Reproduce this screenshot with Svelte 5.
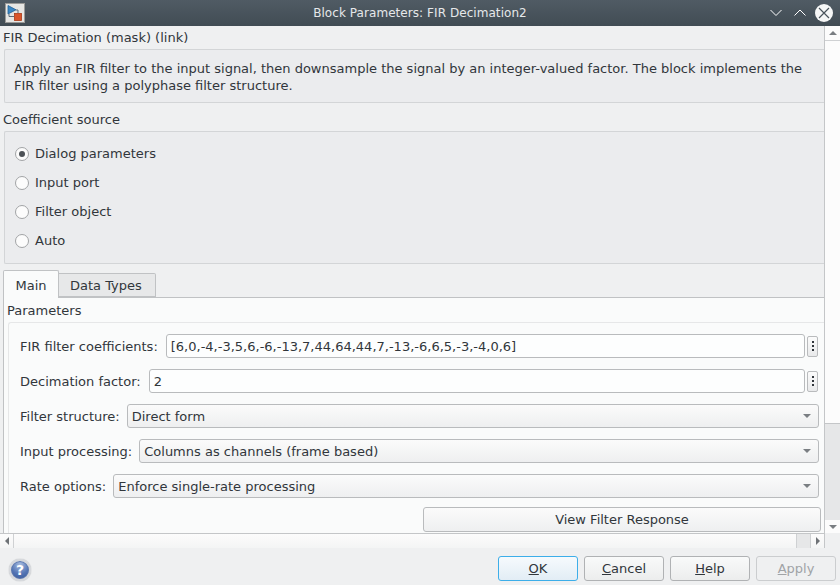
<script>
  const sources = ['Dialog parameters', 'Input port', 'Filter object', 'Auto'];
  const selects = [
    ['Filter structure:', 'Direct form'],
    ['Input processing:', 'Columns as channels (frame based)'],
    ['Rate options:', 'Enforce single-rate processing']
  ];
</script>

<div class="window">
  <header class="titlebar">
    <span class="appicon">
      <svg width="20" height="20" viewBox="0 0 20 20">
        <rect x="0.5" y="0.5" width="19" height="19" fill="#e6e6e4" stroke="#9a9a98" />
        <path d="M3 2.5 L3 11 L11 6.8 Z" fill="#3b87c4" stroke="#1f5f95" stroke-width="0.8" />
        <path d="M4 11 L4 13.5 L9 13.5 M11 7 L13 7 L13 10" fill="none" stroke="#5a6a78" stroke-width="1" />
        <rect x="9.5" y="10.5" width="7" height="7" fill="#d9552b" stroke="#a83a18" stroke-width="0.8" />
      </svg>
    </span>
    <span class="title">Block Parameters: FIR Decimation2</span>
    <span class="controls">
      <svg class="ctl" width="14" height="10" viewBox="0 0 14 10"><path d="M1.5 2 L7 7.5 L12.5 2" /></svg>
      <svg class="ctl" width="14" height="10" viewBox="0 0 14 10"><path d="M1.5 7.5 L7 2 L12.5 7.5" /></svg>
      <span class="close">
        <svg class="x" width="12" height="12" viewBox="0 0 12 12"><path d="M1 1 L11 11 M11 1 L1 11" /></svg>
      </span>
    </span>
  </header>

  <div class="middle">
    <main class="content">
      <div class="caption first">FIR Decimation (mask) (link)</div>
      <div class="box description">Apply an FIR filter to the input signal, then downsample the signal by an integer-valued factor. The block implements the FIR filter using a polyphase filter structure.</div>

      <div class="caption second">Coefficient source</div>
      <div class="box radios">
        {#each sources as s, i}
          <div class="radio-row">
            <span class="radio" class:checked={i === 0}></span>
            <span>{s}</span>
          </div>
        {/each}
      </div>

      <div class="tabs">
        <div class="tab active">Main</div>
        <div class="tab">Data Types</div>
      </div>
      <section class="panel">
        <div class="caption params">Parameters</div>
        <div class="group">
          <div class="row">
            <label for="coef">FIR filter coefficients:</label>
            <input id="coef" class="edit" value="[6,0,-4,-3,5,6,-6,-13,7,44,64,44,7,-13,-6,6,5,-3,-4,0,6]" />
            <span class="more"><i></i><i></i><i></i></span>
          </div>
          <div class="row">
            <label for="dec">Decimation factor:</label>
            <input id="dec" class="edit" value="2" />
            <span class="more"><i></i><i></i><i></i></span>
          </div>
          {#each selects as [label, value]}
            <div class="row">
              <span class="lbl">{label}</span>
              <div class="select">
                <span>{value}</span>
                <span class="arrow down"></span>
              </div>
            </div>
          {/each}
          <div class="view-row">
            <button class="view">View Filter Response</button>
          </div>
        </div>
      </section>
    </main>

    <aside class="vscroll">
      <div class="vbtn up"><span class="arrow upw"></span></div>
      <div class="vthumb"></div>
      <div class="vtrack"></div>
      <div class="vbtn dn"><span class="arrow down"></span></div>
    </aside>
  </div>

  <div class="hscroll">
    <div class="hbtn"><span class="arrow left"></span></div>
    <div class="hthumb"></div>
    <div class="htrack"></div>
    <div class="hbtn rb"><span class="arrow right"></span></div>
    <div class="hgap"></div>
  </div>

  <footer class="footer">
    <span class="help">?</span>
    <span class="spacer"></span>
    <button class="btn ok"><u>O</u>K</button>
    <button class="btn"><u>C</u>ancel</button>
    <button class="btn"><u>H</u>elp</button>
    <button class="btn disabled"><u>A</u>pply</button>
  </footer>
</div>

<style>
  :global(body) { margin: 0; background: #eff0f1; }
  .window {
    width: 840px; height: 585px; display: flex; flex-direction: column; overflow: hidden;
    font: 13px "DejaVu Sans", sans-serif; color: #31363b; background: #eff0f1;
  }
  .titlebar {
    height: 26px; flex: none; display: flex; align-items: center; position: relative;
    background: linear-gradient(#505b64, #414c54); color: #eff0f1;
  }
  .appicon { margin-left: 5px; display: flex; }
  .title { position: absolute; left: 0; width: 840px; text-align: center; font-size: 12px; letter-spacing: 0.06px; color: #e6e8ea; }
  .controls { margin-left: auto; display: flex; align-items: center; position: relative; }
  .ctl { margin-right: 8px; }
  .ctl path { fill: none; stroke: #fff; stroke-width: 1; }
  .ctl:first-child { margin-right: 10px; }
  .close {
    width: 18px; height: 18px; border-radius: 50%; background: #f6f7f7; margin-right: 7px;
    display: flex; align-items: center; justify-content: center;
  }
  .x path { stroke: #4a545c; stroke-width: 1.2; fill: none; }

  .middle { height: 507px; flex: none; display: flex; }
  .content { flex: 1; min-width: 0; overflow: hidden; }
  .caption { line-height: 16px; padding-left: 3px; }
  .first { margin-top: 4px; }
  .box { margin-left: 4px; border: 1px solid #d3d5d7; border-right: 0; background: #ebecee; border-radius: 2px 0 0 2px; }
  .description { margin-top: 3px; height: 42px; padding: 10px 12px 0 9px; line-height: 17px; box-sizing: content-box; }
  .second { margin-top: 9px; }
  .radios { margin-top: 3px; height: 133px; box-sizing: border-box; }
  .radio-row { height: 29px; display: flex; align-items: center; gap: 6px; padding-left: 10px; }
  .radio-row:first-child { margin-top: 7px; }
  .radio {
    width: 14px; height: 14px; box-sizing: border-box; border-radius: 50%; border: 1px solid #a2a4a6; background: #fcfcfc;
    display: flex; align-items: center; justify-content: center; flex: none;
  }
  .radio.checked::after { content: ""; width: 6px; height: 6px; border-radius: 50%; background: #4d5257; }

  .tabs { display: flex; align-items: flex-end; margin: 6px 0 0 3px; height: 27px; position: relative; z-index: 1; }
  .tab {
    height: 24px; padding: 1px 13px 0 11px; display: flex; align-items: center; box-sizing: border-box;
    border: 1px solid #c0c2c4; border-left: 0; background: #e7e8e9; border-radius: 0 2px 0 0; line-height: 16px;
  }
  .tab.active {
    height: 28px; margin-bottom: -1px; width: 56px; justify-content: center; padding: 2px 0 0; border-left: 1px solid #c0c2c4; border-bottom: 0; background: #fafbfb; border-radius: 2px 2px 0 0;
  }
  .panel {
    margin-left: 3px; height: 236px; background: #fafbfb; border-top: 1px solid #c0c2c4; border-left: 1px solid #c0c2c4; box-sizing: border-box;
  }
  .params { line-height: 16px; padding-left: 3px; margin-top: 5px; }
  .group {
    margin: 3px 0 0 4px; border-top: 1px solid #e6e7e8; border-left: 1px solid #e6e7e8; border-radius: 3px 0 0 0;
    padding: 11px 5px 0 11px; background: #fafbfb; height: 211px; box-sizing: border-box;
  }
  .row { height: 24px; margin-bottom: 11px; display: flex; align-items: center; }
  label { flex: none; margin-right: 8px; }
  .lbl { flex: none; margin-right: 7px; }
  .edit {
    flex: 1; min-width: 0; height: 24px; box-sizing: border-box; border: 1px solid #b9bbbd; border-radius: 3px; background: #fdfefe;
    font: inherit; color: inherit; padding: 0 4px; outline: none;
  }
  .more {
    width: 11px; height: 21px; box-sizing: border-box; margin: 0 1px 0 2px; flex: none; border: 1px solid #b9bbbd; border-radius: 2px;
    background: linear-gradient(#fbfbfb, #e9eaeb); display: flex; flex-direction: column; align-items: center; justify-content: center; gap: 2px;
  }
  .more i { width: 2px; height: 2px; background: #31363b; display: block; }
  .select {
    flex: 1; min-width: 0; height: 24px; box-sizing: border-box; border: 1px solid #b9bbbd; border-radius: 3px;
    background: linear-gradient(#fbfbfb, #eeeff0); display: flex; align-items: center; justify-content: space-between; padding: 0 7px 0 4px;
  }
  .arrow { width: 0; height: 0; display: block; }
  .arrow.down { border-left: 4px solid transparent; border-right: 4px solid transparent; border-top: 4px solid #7a7e82; }
  .arrow.upw { border-left: 4px solid transparent; border-right: 4px solid transparent; border-bottom: 4px solid #7a7e82; }
  .arrow.left { border-top: 4px solid transparent; border-bottom: 4px solid transparent; border-right: 4px solid #6e7276; }
  .arrow.right { border-top: 4px solid transparent; border-bottom: 4px solid transparent; border-left: 4px solid #6e7276; }
  .view-row { display: flex; justify-content: flex-end; margin-top: -2px; }
  .view {
    width: 398px; height: 25px; box-sizing: border-box; margin-right: -2px; border: 1px solid #b9bbbd; border-radius: 3px;
    background: linear-gradient(#fbfbfb, #eeeff0); font: inherit; color: inherit; padding: 0;
  }

  .vscroll { width: 16px; flex: none; border-left: 1px solid #c4c6c8; box-sizing: border-box; display: flex; flex-direction: column; background: #fcfcfc; }
  .vbtn { height: 13px; flex: none; display: flex; align-items: center; justify-content: center; background: #fcfcfc; }
  .up { height: 14px; border-bottom: 1px solid #cfd1d3; }
  .vthumb { height: 383px; flex: none; background: #fcfcfc; border-bottom: 1px solid #c4c6c8; box-sizing: border-box; }
  .vtrack { flex: 1; background: #e6e7e8; }

  .hscroll { height: 15px; flex: none; display: flex; box-sizing: border-box; border-top: 1px solid #c4c6c8; background: linear-gradient(#fcfcfc, #f4f5f5); }
  .hbtn { width: 14px; flex: none; display: flex; align-items: center; justify-content: center; border-right: 1px solid #cfd1d3; box-sizing: border-box; }
  .hthumb { flex: 1; }
  .htrack { width: 13px; background: #e6e7e8; border-left: 1px solid #cfd1d3; border-right: 1px solid #cfd1d3; }
  .rb { border-right: 1px solid #c4c6c8; }
  .hgap { width: 15px; margin-top: -1px; background: #eff0f1; }

  .footer { flex: 1; display: flex; align-items: center; padding: 7px 4px 4px 9px; box-sizing: border-box; gap: 6px; }
  .spacer { flex: 1; }
  .help {
    width: 22px; height: 22px; border-radius: 50%; border: 2px solid #d6d8dc; box-shadow: inset 0 0 0 1px #5d78ae, 0 0 1px #8a8e96;
    background: radial-gradient(circle at 50% 20%, #a6bbdf, #5374b4 55%, #3a5a9c 90%); color: #fff; font-weight: bold; font-size: 14px;
    display: flex; align-items: center; justify-content: center; box-sizing: border-box; margin-top: 3px; flex: none;
  }
  .btn {
    width: 80px; height: 25px; box-sizing: border-box; border: 1px solid #b0b2b4; border-radius: 3px; padding: 0;
    background: linear-gradient(#f9fafa, #eceded); font: inherit; color: inherit;
  }
  .ok { border-color: #3daee9; background: linear-gradient(#f6fafd, #e2edf5); }
  .disabled { color: #a0a3a6; border-color: #cbcdcf; background: #eff0f1; }
</style>
